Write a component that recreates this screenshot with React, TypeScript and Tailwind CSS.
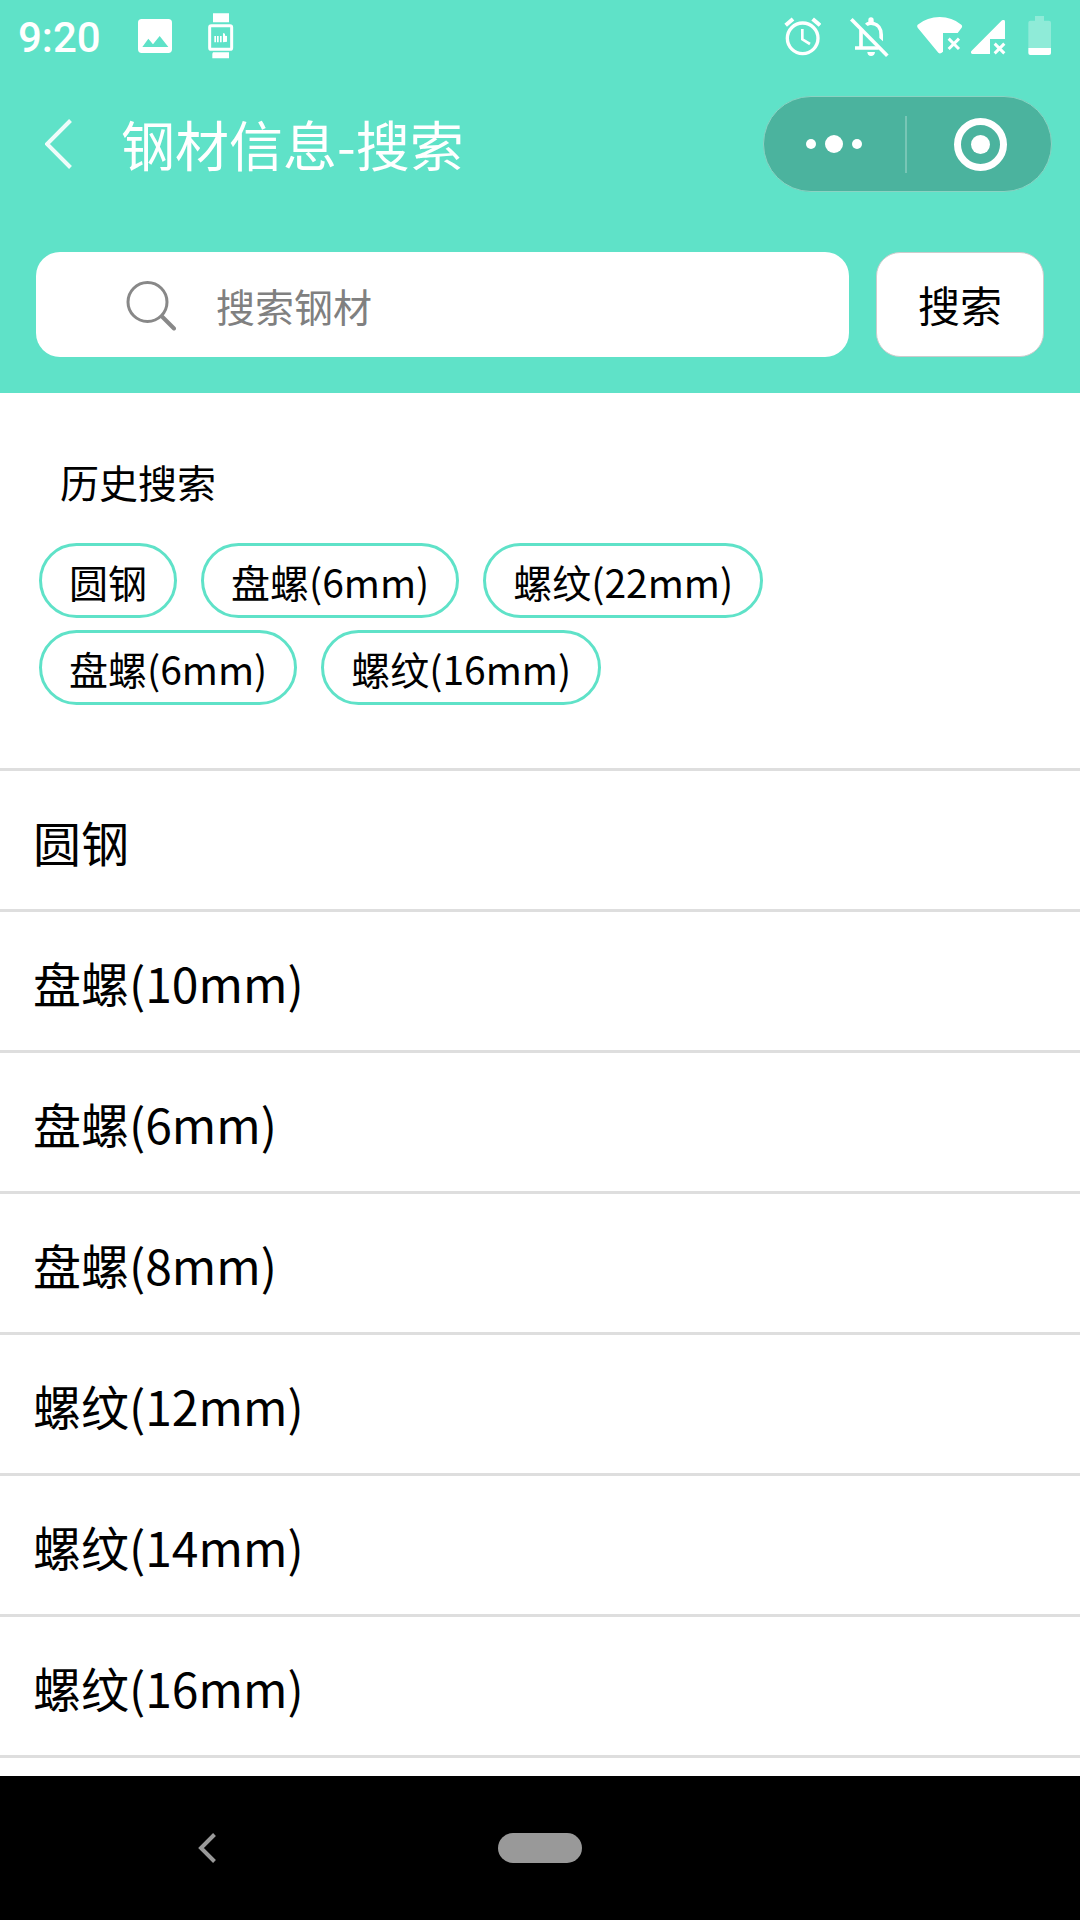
import React from "react";

const history = ["圆钢", "盘螺(6mm)", "螺纹(22mm)", "盘螺(6mm)", "螺纹(16mm)"];

const results = [
  "圆钢",
  "盘螺(10mm)",
  "盘螺(6mm)",
  "盘螺(8mm)",
  "螺纹(12mm)",
  "螺纹(14mm)",
  "螺纹(16mm)",
];

function PictureIcon() {
  return (
    <svg viewBox="414 45 102 126" className="h-[42px] w-[34px]" aria-hidden="true">
      <path
        fill="#fff"
        fillRule="evenodd"
        d="M425 57H505Q516 57 516 68V148Q516 159 505 159H425Q414 159 414 148V68Q414 57 425 57ZM427 141H505L479 108L459 133L445 116Z"
      />
    </svg>
  );
}

function WatchIcon() {
  return (
    <svg viewBox="624 38 78 141" className="h-[47px] w-[26px]" aria-hidden="true">
      <path fill="#fff" d="M639 39H687V66H639ZM639 156H687V174H637V160Z" />
      <rect x="629" y="76" width="66" height="71" rx="5" fill="none" stroke="#fff" strokeWidth="9" />
      <path
        fill="#fff"
        d="M643 107H648V126H643ZM651 107H656V126H651ZM660 107H665V126H660ZM669 98L675 100V106L681 107V124L669 126Z"
      />
    </svg>
  );
}

function AlarmIcon() {
  return (
    <svg viewBox="72 45 111 126" className="h-[42px] w-[37px]" aria-hidden="true">
      <g fill="none" stroke="#fff">
        <circle cx="128" cy="115" r="46" strokeWidth="10" />
        <path strokeWidth="12" d="M77 76L99 57M158 57L180 76" />
        <path strokeWidth="8" d="M127 87V118L150 132" />
      </g>
    </svg>
  );
}

function BellOffIcon() {
  return (
    <svg viewBox="270 45 117 126" className="h-[42px] w-[39px]" aria-hidden="true">
      <path fill="none" stroke="#fff" strokeWidth="11" d="M274 58L382 167" />
      <path fill="none" stroke="#fff" strokeWidth="11" d="M303 88V144M285 144H356" />
      <path
        fill="#fff"
        d="M315 71Q319 67 325 65V60Q325 52 333 52Q341 52 341 60V65Q369 73 369 104V124L358 114V104Q358 76 333 75Q328 75 323 78Z"
      />
      <path fill="#fff" d="M322 156H345Q344 168 333 168Q323 168 322 156Z" />
    </svg>
  );
}

function WifiIcon() {
  return (
    <svg viewBox="471 45 138 126" className="h-[42px] w-[46px]" aria-hidden="true">
      <path
        fill="#fff"
        d="M473 74Q502 51 539 51Q576 51 604 74Q608 78 605 83L593 99H549V155L544 159Q539 162 535 158L473 83Q470 78 473 74Z"
      />
      <path fill="none" stroke="#fff" strokeWidth="9" d="M566 116L597 147M597 116L566 147" />
    </svg>
  );
}

function SignalIcon() {
  return (
    <svg viewBox="633 45 105 126" className="h-[42px] w-[35px]" aria-hidden="true">
      <path fill="#fff" d="M726 61Q729 59 732 60Q735 61 735 65V117H690V162H638Q634 162 633 158Q632 155 635 152Z" />
      <path fill="none" stroke="#fff" strokeWidth="9" d="M704 131L733 160M733 131L704 160" />
    </svg>
  );
}

function BatteryIcon() {
  return (
    <svg viewBox="804 45 69 126" className="h-[42px] w-[23px]" aria-hidden="true">
      <path fill="#fff" fillOpacity="0.3" d="M825 48H852V62H867Q873 62 873 68V144H805V68Q805 62 811 62H825Z" />
      <path fill="#fff" d="M805 144H873V159Q873 165 867 165H811Q805 165 805 159Z" />
    </svg>
  );
}

function StatusBar() {
  return (
    <div className="flex h-[72px] items-center justify-between pr-[29px] pl-[18px] text-white">
      <div className="flex items-center">
        <span className="w-[120px] pt-1 font-['Roboto'] text-[42px] leading-[48px] font-medium">9:20</span>
        <PictureIcon />
        <span className="ml-9 flex">
          <WatchIcon />
        </span>
      </div>
      <div className="flex items-center">
        <div className="mr-7 flex gap-[29px]">
          <AlarmIcon />
          <BellOffIcon />
        </div>
        <div className="mr-[22px] flex gap-2">
          <WifiIcon />
          <SignalIcon />
        </div>
        <BatteryIcon />
      </div>
    </div>
  );
}

function TitleBar() {
  return (
    <div className="flex h-36 items-center justify-between pr-7 pl-[45px] text-white">
      <div className="flex items-center gap-[49px]">
        <button type="button" aria-label="返回">
          <svg viewBox="0 0 27 50" className="h-[50px] w-[27px]" aria-hidden="true">
            <path d="M25.500 1.500L2 25L25.500 48.500" fill="none" stroke="#fff" strokeOpacity="0.9" strokeWidth="4" />
          </svg>
        </button>
        <h1 className="text-[54px] leading-[76px]">钢材信息-搜索</h1>
      </div>
      <div className="flex h-24 w-[289px] items-center rounded-full border border-[#8ad3c3] bg-[#4bb39e]">
        <button type="button" aria-label="更多" className="flex flex-1 items-center justify-center gap-[9px]">
          <span className="size-[10px] rounded-full bg-white" />
          <span className="size-[18px] rounded-full bg-white" />
          <span className="size-[10px] rounded-full bg-white" />
        </button>
        <span className="h-[57px] w-[2px] bg-[#78c6b6]" />
        <button type="button" aria-label="关闭" className="flex flex-1 items-center justify-center pl-1">
          <span className="flex size-[53px] items-center justify-center rounded-full border-[7px] border-white">
            <span className="size-[19px] rounded-full bg-white" />
          </span>
        </button>
      </div>
    </div>
  );
}

function SearchBar() {
  return (
    <form className="flex gap-[27px] p-9" onSubmit={(e) => e.preventDefault()}>
      <label className="flex h-[105px] min-w-0 flex-1 items-center gap-10 rounded-3xl bg-white pr-6 pl-[90px]">
        <svg viewBox="0 0 50 52" className="h-[52px] w-[50px] shrink-0" aria-hidden="true">
          <g fill="none" stroke="#888" strokeWidth="3">
            <circle cx="21.500" cy="23" r="19.500" />
            <path strokeWidth="4" strokeLinecap="round" d="M36 37.500L48 49.500" />
          </g>
        </svg>
        <input
          type="text"
          aria-label="搜索钢材"
          placeholder="搜索钢材"
          className="h-[60px] min-w-0 flex-1 bg-transparent text-[39px] text-black outline-none placeholder:text-[#808080]"
        />
      </label>
      <button type="submit" className="w-[168px] rounded-3xl border border-[#ccc] bg-white pb-0.5 text-[42px] leading-[60px]">
        搜索
      </button>
    </form>
  );
}

export default function App() {
  return (
    <div className="flex min-h-screen flex-col bg-white font-['Noto_Sans_CJK_SC',sans-serif] text-black">
      <header className="bg-[#5fe2c8]">
        <StatusBar />
        <TitleBar />
        <SearchBar />
      </header>

      <main className="flex-1 pb-[18px]">
        <section className="px-[39px] pt-[58px] pb-[63px]">
          <h2 className="mb-8 pl-[21px] text-[39px] leading-[60px]">历史搜索</h2>
          <div className="flex flex-wrap gap-x-6 gap-y-3">
            {history.map((item, i) => (
              <button
                key={i}
                type="button"
                className="h-[75px] rounded-full border-[3px] border-[#5fe2c8] px-[27px] pt-px text-[39px] leading-[68px] whitespace-nowrap"
              >
                {item}
              </button>
            ))}
          </div>
        </section>

        <ul className="border-b-[3px] border-[#dedede]">
          {results.map((item) => (
            <li key={item} className="border-t-[3px] border-[#dedede]">
              <a href="#" className="block px-[33px] pt-[34px] pb-8 text-[48px] leading-[72px]">
                {item}
              </a>
            </li>
          ))}
        </ul>
      </main>

      <nav className="grid h-36 grid-cols-[1fr_84px_1fr] items-center bg-black">
        <button type="button" aria-label="返回" className="ml-[198px] w-[18px]">
          <svg viewBox="0 0 18 30" className="h-[30px] w-[18px]" aria-hidden="true">
            <path d="M16.500 1.500L3 15L16.500 28.500" fill="none" stroke="#999" strokeWidth="4" />
          </svg>
        </button>
        <button type="button" aria-label="主屏幕" className="h-[30px] rounded-full bg-[#999]" />
      </nav>
    </div>
  );
}
